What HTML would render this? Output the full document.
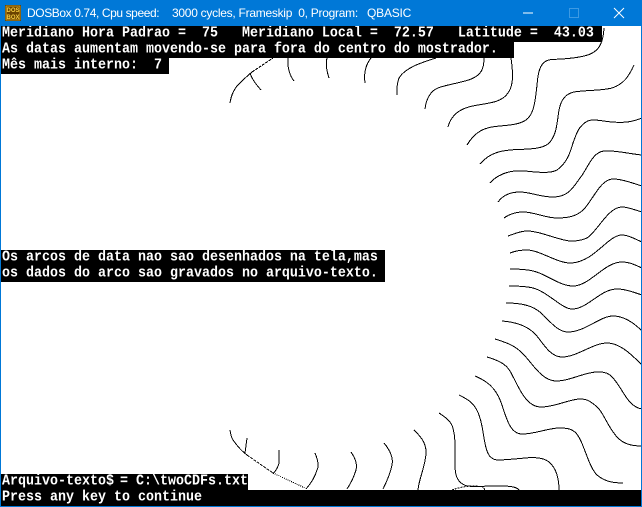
<!DOCTYPE html>
<html>
<head>
<meta charset="utf-8">
<style>
html,body{margin:0;padding:0;background:#fff;}
#w{position:relative;width:642px;height:507px;overflow:hidden;background:#fff;}
#tb{position:absolute;left:0;top:0;width:642px;height:26px;background:#0078d7;}
.t{position:absolute;top:5px;color:#fff;font:12px/16px "Liberation Sans",sans-serif;white-space:pre;}
.r{position:absolute;left:1px;height:16px;background:#000;color:#fff;font:bold 13.33px/16px "Liberation Mono",monospace;white-space:pre;padding-left:1px;box-sizing:border-box;}
.r span.s{display:block;transform-origin:0 11.5px;transform:translateY(.7px) scaleY(1.13);}
svg{position:absolute;left:0;top:0;}
.e{position:absolute;background:#0078d7;}
</style>
</head>
<body>
<div id="w">
<svg width="642" height="507" fill="none" stroke="#000" stroke-width="1" shape-rendering="crispEdges">
<path d="M327 58Q325 66 329 78"/>
<path d="M371 58Q363 68 365 83"/>
<path d="M436 58C420 63 405 68 399 78C397 83 397 88 397 95"/>
<path d="M484 58C484 68 482 75 470 79.5C460 83 445 85 438 88C430 91 426 100 425 109"/>
<path d="M511 58C513 72 514 85 508 93C502 102 490 103 478 105C464 107 452 112 448 127"/>
<path d="M604 28C603 45 598 53 584 56C572 59 560 59 552 59.5C541 60 538 70 537 85C535 105 533 115 526 120C520 124 512 125 500 126C486 127 476 130 467 145"/>
<path d="M634 65C629 76 624 84 612 88C600 91 585 90 574 92C565 94 561 100 559 110C557 122 557 136 548 144C541 149 530 149 518 149.5C503 150 490 152 480 164"/>
<path d="M642 118C632 122 625 123 612 122C600 121 592 118 586 122C578 127 576 135 573 143C570 153 567 163 557 170C550 174 535 172 525 171C512 170 499 173 490 183"/>
<path d="M642 155C630 154 615 150 604 151C592 152 587 170 580 178C573 188 568 197 553 197C540 197 530 192 520 192C510 192 503 195 498 202"/>
<path d="M642 186C632 183 622 179 613 179C600 179 592 202 583 210C576 217 566 218 557 218C545 218 535 212 523 212C515 212 508 215 504 218"/>
<path d="M642 212C635 210 628 207 622 207C608 207 597 232 587 238C580 241 575 241 570 241C558 240 540 231 527 231C520 231 514 234 508 236"/>
<path d="M642 242C635 239 628 235 622 235C608 235 595 261 572 263C558 264 540 250 527 250C520 250 515 251 510 253"/>
<path d="M642 268C635 265 630 262 622 262C604 262 590 286 573 286C558 286 545 272 528 270C520 269 515 269 510 269"/>
<path d="M642 295C633 292 625 289 617 289C600 289 588 309 572 309C562 309 548 292 533 288C525 286 517 286 509 286"/>
<path d="M642 331C635 324 625 316 613 316C600 316 585 332 568 332C555 332 545 314 537 310C530 305 518 303 506 303"/>
<path d="M642 365C632 355 620 343 607 343C593 343 577 357 562 357C548 357 540 337 533 332C525 325 515 322 502 321"/>
<path d="M642 409C635 408 630 403 626 397C620 388 616 380 610 375C606 372 602 372 597 372C585 372 570 381 556 381C542 381 532 363 524 355C516 346 508 343 495 339"/>
<path d="M642 446C634 446 625 445 618 438C608 428 603 411 596 406C590 401 587 399 580 399C570 399 555 407 541 407C525 407 518 385 510 371C505 363 497 360 487 357"/>
<path d="M623 483C612 483 604 481 597 475C588 466 584 442 576 433C571 428 565 428 558 428C545 429 535 434 522 434C510 434 506 417 502 405C498 393 492 383 475 376"/>
<path d="M559 490C559 478 556 468 549 462C544 458 535 457 525 458C515 459 505 460 497 460C488 459 486 450 484 438C482 425 480 414 475 407C471 401 465 398 459 395"/>
<path d="M519 490C516 486 507 486 497 486C485 486 475 487 467 486C457 483 455 475 455 465C455 450 456 440 453 428C451 421 445 417 439 413"/>
<path d="M418 490C419 478 426 465 426 452C426 442 420 436 414 430"/>
<path d="M452 490Q460 487 470 486Q480 486 483 487L485 490" stroke-dasharray="2 1"/>
<path d="M230 103Q232 90 240 83Q246 77 252 72"/>
<path d="M252 72L273 58" stroke-dasharray="3 1"/>
<path d="M250 73Q252 80 261 90"/>
<path d="M288 58Q287 72 294 81"/>
<path d="M230 430Q231 437 233 440Q240 450 247 455"/>
<path d="M247 455L273 473" stroke-dasharray="3 1"/>
<path d="M273 473L305 488" stroke-dasharray="1 1"/>
<path d="M247 438L245 453"/>
<path d="M279 450L279 463Q278 468 273 474"/>
<path d="M315 453Q320 465 317 470Q314 480 306 489"/>
<path d="M351 452Q358 462 356 470Q353 480 347 489"/>
<path d="M384 443Q394 455 392 465Q390 475 383 489"/>
</svg>

<div class="r" style="top:26px;width:601px"><span class="s">Meridiano Hora Padrao =  75   Meridiano Local =  72.57   Latitude =  43.03</span></div>
<div class="r" style="top:42px;width:513px"><span class="s">As datas aumentam movendo-se para fora do centro do mostrador.</span></div>
<div class="r" style="top:58px;width:168px"><span class="s">Mês mais interno:  7</span></div>
<div class="r" style="top:250px;width:384px"><span class="s">Os arcos de data nao sao desenhados na tela,mas</span></div>
<div class="r" style="top:266px;width:384px"><span class="s">os dados do arco sao gravados no arquivo-texto.</span></div>
<div class="r" style="top:474px;width:247px"><span class="s">Arquivo-texto$ <span style="margin-left:-2px">= C:\twoCDFs.txt</span></span></div>
<div class="r" style="top:490px;width:640px"><span class="s">Press any key to continue</span></div>

<div id="tb"></div>
<div class="e" style="left:0;top:0;width:1px;height:507px"></div>
<div class="e" style="left:641px;top:0;width:1px;height:507px"></div>
<div class="e" style="left:0;top:506px;width:642px;height:1px"></div>

<svg width="642" height="26">
<rect x="5" y="5" width="16" height="16" fill="#4a2c00"/>
<rect x="6" y="6" width="14" height="14" fill="#6b4300" stroke="#c89a20" stroke-width="1"/>
<text x="13" y="12" font-family="Liberation Sans,sans-serif" font-size="6" font-weight="bold" fill="#f4cc40" text-anchor="middle">DOS</text>
<text x="13" y="19" font-family="Liberation Sans,sans-serif" font-size="6" font-weight="bold" fill="#f4cc40" text-anchor="middle">BOX</text>
<path d="M523 13H533" stroke="#fff" stroke-width="1" shape-rendering="crispEdges"/>
<rect x="569.5" y="8.5" width="9" height="9" fill="none" stroke="#3d9ae3" stroke-width="1"/>
<path d="M614 8L624 18M624 8L614 18" stroke="#fff" stroke-width="1" fill="none"/>
</svg>
<div class="t" style="left:27px;letter-spacing:-.4px">DOSBox 0.74, Cpu speed:</div>
<div class="t" style="left:172px;letter-spacing:-.27px">3000 cycles, Frameskip  0, Program:</div>
<div class="t" style="left:367px;letter-spacing:-.2px">QBASIC</div>
</div>
</body>
</html>
